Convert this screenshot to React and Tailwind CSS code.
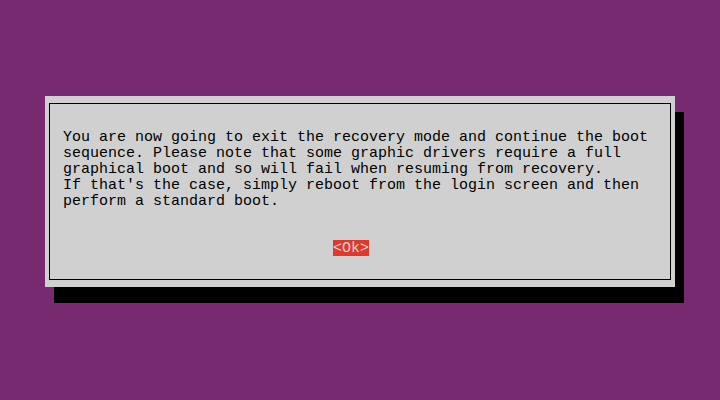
import React from 'react';

const lines = [
  'You are now going to exit the recovery mode and continue the boot',
  'sequence. Please note that some graphic drivers require a full',
  'graphical boot and so will fail when resuming from recovery.',
  "If that's the case, simply reboot from the login screen and then",
  'perform a standard boot.',
];

const App = () => {
  return (
    <div
      className="w-[720px] h-[400px] bg-[#772a6f] pt-[96px] pl-[45px] overflow-hidden"
      style={{ fontFamily: '"Liberation Mono", "DejaVu Sans Mono", monospace' }}
    >
      {/* dialog with console-style drop shadow */}
      <div className="w-[630px] h-[191px] bg-[#d0d0d0] shadow-[9px_16px_0_0_#000] pt-[7px] px-[4px]">
        <div className="h-[177px] border border-black pl-[13px] pt-[26px] flex flex-col">
          <div className="text-[15px] leading-[16px] text-black whitespace-pre">
            {lines.map((l, i) => (
              <div key={i}>{l}</div>
            ))}
          </div>
          <div className="mt-[30px] pl-[270px] flex">
            <span className="block h-[16px] pt-[1px] bg-[#e0382a] text-[#d8d8d8] text-[15px] leading-[15px] whitespace-pre">
              {'<Ok>'}
            </span>
          </div>
        </div>
      </div>
    </div>
  );
};

export default App;
